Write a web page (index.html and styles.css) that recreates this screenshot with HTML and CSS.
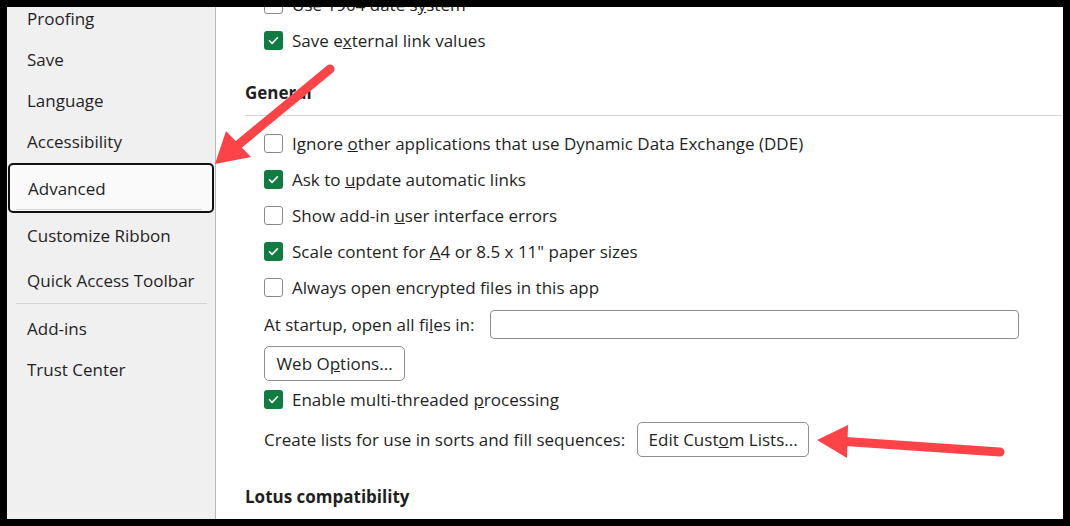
FILE: index.html
```html
<!DOCTYPE html>
<html lang="en">
<head>
    <meta charset="UTF-8">
    <title>Excel Options - Advanced</title>
    <link rel="stylesheet" href="styles.css">
</head>
<body>
    <div class="window">
        <nav class="sidebar">
            <a class="nav-item" href="#">Proofing</a>
            <a class="nav-item" href="#">Save</a>
            <a class="nav-item" href="#">Language</a>
            <a class="nav-item" href="#">Accessibility</a>
            <a class="nav-item active" href="#">Advanced</a>
            <a class="nav-item tall" href="#">Customize Ribbon</a>
            <a class="nav-item tall" href="#">Quick Access Toolbar</a>
            <div class="nav-sep"></div>
            <a class="nav-item" href="#">Add-ins</a>
            <a class="nav-item" href="#">Trust Center</a>
        </nav>

        <main class="content">
            <label class="option"><span class="box"></span><span>Use 1904 date s<u>y</u>stem</span></label>
            <label class="option"><span class="box checked"></span><span>Save e<u>x</u>ternal link values</span></label>

            <h2 class="section">General</h2>

            <div class="options">
                <label class="option"><span class="box"></span><span>Ignore <u>o</u>ther applications that use Dynamic Data Exchange (DDE)</span></label>
                <label class="option"><span class="box checked"></span><span>Ask to <u>u</u>pdate automatic links</span></label>
                <label class="option"><span class="box"></span><span>Show add-in <u>u</u>ser interface errors</span></label>
                <label class="option"><span class="box checked"></span><span>Scale content for <u>A</u>4 or 8.5 x 11" paper sizes</span></label>
                <label class="option"><span class="box"></span><span>Always open encrypted files in this app</span></label>

                <div class="field-row">
                    <span class="field-label">At startup, open all fi<u>l</u>es in:</span>
                    <input class="field" type="text">
                </div>

                <button class="btn web-btn">Web O<u>p</u>tions...</button>

                <label class="option"><span class="box checked"></span><span>Enable multi-threaded <u>p</u>rocessing</span></label>

                <div class="list-row">
                    <span>Create lists for use in sorts and fill sequences:</span>
                    <button class="btn">Edit Cust<u>o</u>m Lists...</button>
                </div>
            </div>

            <h2 class="section lotus">Lotus compatibility</h2>
        </main>
    </div>

    <!-- annotation arrows drawn over the screenshot -->
    <svg class="arrows" width="1070" height="526" viewBox="0 0 1070 526">
        <line x1="330" y1="69" x2="238" y2="145" stroke="#fc4347" stroke-width="9" stroke-linecap="round"/>
        <polygon points="215,164 226,131 251,157" fill="#fc4347"/>
        <line x1="838" y1="441" x2="1000" y2="452" stroke="#fc4347" stroke-width="9" stroke-linecap="round"/>
        <polygon points="817,440 848,425 847,458" fill="#fc4347"/>
    </svg>
</body>
</html>
```

FILE: styles.css
```css
* {
    margin: 0;
    padding: 0;
    box-sizing: border-box;
}

body {
    background: #000;
    font-family: 'Open Sans', 'Noto Sans', sans-serif;
    font-size: 17px;
    color: #1f1f1f;
    overflow: hidden;
}

.window {
    margin: 7px;
    height: 512px;
    display: flex;
    overflow: hidden;
    background: #fff;
}

/* left navigation */
.sidebar {
    width: 209px;
    flex: 0 0 209px;
    background: #f0f0f0;
    border-right: 1px solid #b9b9b9;
    display: flex;
    flex-direction: column;
    margin-top: -9px;
}

.nav-item {
    display: flex;
    align-items: center;
    height: 41px;
    padding-left: 20px;
    color: #1f1f1f;
    text-decoration: none;
}

.nav-item.tall {
    height: 45px;
}

.nav-item.active {
    position: relative;
    height: 50px;
    margin: 1px 1px 0 1px;
    padding-left: 18px;
    background: #fafafa;
    border: 2px solid #111;
    border-radius: 5px;
}

.nav-item.active::after {
    content: '';
    position: absolute;
    left: 6px;
    right: 10px;
    bottom: 1px;
    border-bottom: 1px solid #d6d6d6;
}

.nav-sep {
    height: 1px;
    margin: 0 8px 4px 9px;
    background: #d4d4d4;
}

/* right pane */
.content {
    flex: 1;
    padding-left: 29px;
    margin-top: -21px;
}

.option {
    display: flex;
    align-items: center;
    gap: 9px;
    height: 36px;
    padding-left: 19px;
}

.box {
    width: 19px;
    height: 19px;
    flex: 0 0 19px;
    border: 1.5px solid #8a8a8a;
    border-radius: 3px;
    background: #fff;
}

.box.checked {
    border: none;
    background: #107c41 url("data:image/svg+xml,%3Csvg xmlns='http://www.w3.org/2000/svg' viewBox='0 0 19 19'%3E%3Cpath d='M5.5 9.8l2.6 2.6 5.3-5.6' fill='none' stroke='%23fff' stroke-width='1.6' stroke-linecap='round' stroke-linejoin='round'/%3E%3C/svg%3E") center / 19px 19px no-repeat;
}

.section {
    font-size: 17px;
    font-weight: 700;
    line-height: 24px;
    padding: 23px 0 10px;
    border-bottom: 1px solid #d8d8d8;
}

.options {
    padding-top: 9px;
}

.field-row {
    display: flex;
    align-items: center;
    margin-top: 5px;
    padding: 0 44px 0 19px;
}

.field-label {
    flex: 0 0 226px;
    white-space: nowrap;
}

.field {
    flex: 1;
    height: 29px;
    border: 1px solid #8c8c8c;
    border-radius: 4px;
    background: #fff;
}

.btn {
    font-family: inherit;
    font-size: 17px;
    color: #1f1f1f;
    height: 35px;
    padding: 0 8px;
    background: #fff;
    border: 1px solid #8f8f8f;
    border-radius: 5px;
    white-space: nowrap;
}

.web-btn {
    display: block;
    width: 141px;
    margin: 7px 0 0 19px;
}

.list-row {
    display: flex;
    align-items: center;
    gap: 12px;
    margin-top: 5px;
    padding-left: 19px;
}

.list-row .btn {
    width: 172px;
}

.section.lotus {
    padding-top: 28px;
}

.arrows {
    position: absolute;
    top: 0;
    left: 0;
    pointer-events: none;
}
```
